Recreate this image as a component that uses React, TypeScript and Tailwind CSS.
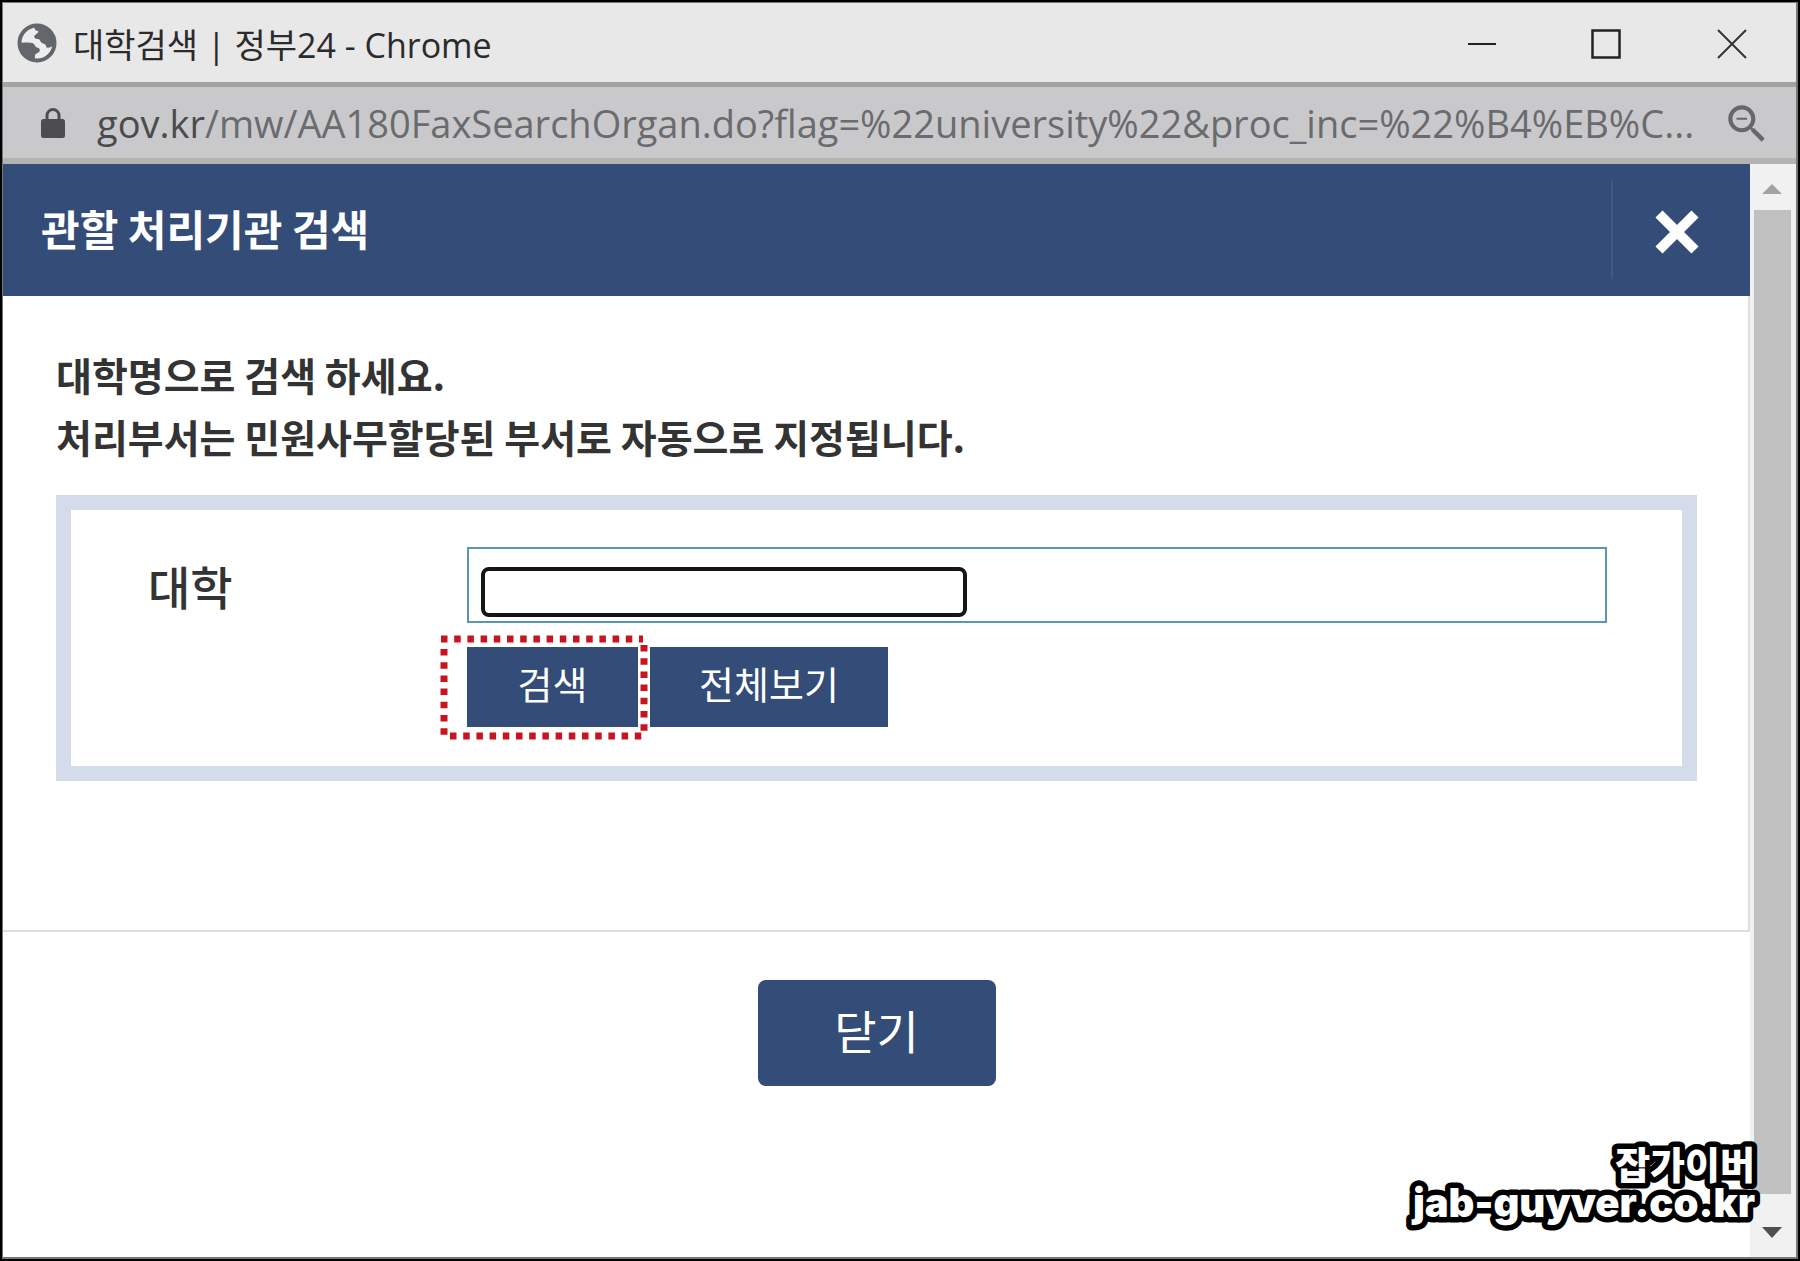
import React, { useState } from 'react';
import { MdZoomOut } from 'react-icons/md';

const GlobeIcon: React.FC = () => (
  <svg className="size-10 shrink-0" viewBox="0 0 40 40" aria-hidden="true">
    <circle cx="20" cy="20" r="17.500" fill="#eceded" stroke="#63666a" strokeWidth="4" />
    <path
      d="M18 3c-1.500 3 .5 4.500 3 5 1.500 1.500-2 3-3.500 4.500-1 2 1 3.500 3.500 3.500 2.500.3 2 3 4 4 3 .8 4 2 4.500 4.500 2 1 5-.5 7-2A17.500 17.500 0 0 0 18 3z"
      fill="#63666a"
    />
    <path
      d="M2.500 19.500c4 .6 9-.8 13 .6 2.500 1 2 3.400 4.500 4.400 2.500.6 3.500 2 2.500 4-1.500 2-4 1.500-4.500 4-.2 2 0 3.500-.5 5A18 18 0 0 1 2.500 19.500z"
      fill="#63666a"
    />
  </svg>
);

const LockIcon: React.FC = () => (
  <svg className="h-8 w-6 shrink-0" viewBox="0 0 24 32" fill="none" aria-hidden="true">
    <rect x="0" y="12" width="24" height="19" rx="2.500" fill="#4c4d50" />
    <path d="M6 13V8.500a6 6 0 0 1 12 0V13" stroke="#4c4d50" strokeWidth="3" />
  </svg>
);

const TitleBar: React.FC = () => (
  <header className="flex h-[84px] items-center justify-between border-b-[5px] border-[#a3a3a3] bg-[#e8e8e8] pl-3.5">
    <div className="flex items-center gap-4 text-[34px] leading-none text-[#2b2b2b]">
      <GlobeIcon />
      <h1 className="pt-1 font-['Open_Sans','Noto_Sans_CJK_KR',sans-serif]">대학검색 | 정부24 - Chrome</h1>
    </div>
    <div className="flex pt-0.5">
      <button aria-label="최소화" className="flex h-[77px] w-[124px] items-center justify-center">
        <svg width="30" height="30" viewBox="0 0 30 30" fill="none" stroke="#222" strokeWidth="2">
          <path d="M1 15h28" />
        </svg>
      </button>
      <button aria-label="최대화" className="flex h-[77px] w-[124px] items-center justify-center">
        <svg width="30" height="30" viewBox="0 0 30 30" fill="none" stroke="#222" strokeWidth="2.500">
          <path d="M1.500 1.500h27v27h-27z" />
        </svg>
      </button>
      <button aria-label="창 닫기" className="flex h-[77px] w-[128px] items-center justify-center">
        <svg width="30" height="30" viewBox="0 0 30 30" fill="none" stroke="#333" strokeWidth="2">
          <path d="M1 1l28 28M29 1L1 29" />
        </svg>
      </button>
    </div>
  </header>
);

const AddressBar: React.FC = () => (
  <div className="flex h-[77px] items-center border-b-[6px] border-[#b3b4b0] bg-[#c9c9cb] pr-6 pl-[38px]">
    <LockIcon />
    <p className="ml-8 min-w-0 flex-1 font-['Open_Sans',sans-serif] text-[38px] leading-none whitespace-nowrap text-[#6a6b6e]">
      <span className="text-[#4a4b4e]">gov.kr</span>/mw/AA180FaxSearchOrgan.do?flag=%22university%22&amp;proc_inc=%22%B4%EB%C...
    </p>
    <MdZoomOut className="mt-0.5 size-[50px] shrink-0 text-[#66676a]" />
  </div>
);

const Scrollbar: React.FC = () => (
  <div className="flex w-[46px] shrink-0 flex-col items-center bg-[#f1f1f1] pr-0.5" aria-hidden="true">
    <svg className="mt-5 mb-4" width="20" height="10" viewBox="0 0 20 10">
      <path d="M10 0l10 10H0z" fill="#a3a3a3" />
    </svg>
    <div className="w-[37px] flex-1 bg-[#c1c1c1]" />
    <svg className="mt-[33px] mb-[19px]" width="20" height="11" viewBox="0 0 20 11">
      <path d="M0 0h20L10 11z" fill="#505050" />
    </svg>
  </div>
);

const SearchForm: React.FC = () => {
  const [university, setUniversity] = useState('');

  return (
    <form
      onSubmit={(e) => e.preventDefault()}
      className="flex border-[15px] border-[#d4dceb] pt-[37px] pr-[75px] pb-[39px] pl-[77px]"
    >
      <label htmlFor="university" className="w-[319px] shrink-0 pt-1 text-[46px] leading-[68px] font-medium text-[#333]">
        대학
      </label>
      <div className="flex-1">
        <div className="relative">
          <input
            id="university"
            type="text"
            value={university}
            onChange={(e) => setUniversity(e.target.value)}
            className="block h-[76px] w-full border-2 border-[#5c95b0] bg-white px-4 text-4xl outline-none"
          />
          <div className="pointer-events-none absolute top-5 left-3.5 h-[50px] w-[486px] rounded-lg border-4 border-[#151515] bg-white" />
        </div>
        <div className="mt-6 flex gap-3 text-[38px] leading-none text-white">
          <div className="relative">
            <button type="submit" className="h-20 w-[171px] bg-[#334c78] pb-2">
              검색
            </button>
            <svg
              className="pointer-events-none absolute -top-3 -left-7"
              width="210"
              height="106"
              viewBox="0 0 210 106"
              fill="none"
              stroke="#c8141e"
              strokeWidth="7"
            >
              <path d="M2 4h202" strokeDasharray="6.500 6.700" />
              <path d="M5 14v88" strokeDasharray="6.500 6.700" />
              <path d="M11 101h194" strokeDasharray="6.500 6.700" />
              <path d="M205 10v88" strokeDasharray="6.500 6.700" />
            </svg>
          </div>
          <button type="button" className="h-20 w-[238px] bg-[#334c78] pb-2">
            전체보기
          </button>
        </div>
      </div>
    </form>
  );
};

const Watermark: React.FC = () => (
  <svg
    className="pointer-events-none absolute right-8 bottom-6 font-black"
    width="380"
    height="100"
    viewBox="0 0 380 100"
    fill="#fff"
    stroke="#000"
    strokeWidth="11"
    strokeLinejoin="round"
    paintOrder="stroke"
    textAnchor="end"
  >
    <text x="371" y="46" className="font-['Noto_Sans_CJK_KR',sans-serif] text-[38px]">
      잡가이버
    </text>
    <text x="371" y="84" className="font-['Inter',sans-serif] text-[40px]">
      jab-guyver.co.kr
    </text>
  </svg>
);

const App: React.FC = () => (
  <div className="flex min-h-screen flex-col bg-black p-0.5 font-['Noto_Sans_CJK_KR',sans-serif]">
    <div className="relative flex flex-1 flex-col border border-r-2 border-b-2 border-[#777] bg-white">
      <TitleBar />
      <AddressBar />
      <div className="flex flex-1">
        <main className="min-w-0 flex-1">
          <section className="border-r-2 border-b-2 border-[#dedede]">
            <div className="-mr-0.5 flex h-[132px] items-center justify-between bg-[#334c78] pl-[38px] text-white">
              <h2 className="pb-1 text-[42px] leading-none font-bold">관할 처리기관 검색</h2>
              <div className="flex h-[98px] w-[139px] items-center border-l-2 border-[#405a87] pt-1 pl-2">
                <button aria-label="닫기" className="flex h-full w-28 items-center justify-center">
                  <svg width="44" height="44" viewBox="0 0 44 44" fill="none" stroke="currentColor" strokeWidth="10">
                    <path d="M4 4l36 36M40 4L4 40" />
                  </svg>
                </button>
              </div>
            </div>
            <div className="pt-[47px] pr-[51px] pb-[149px] pl-[53px]">
              <p className="mb-7 text-[39px] leading-[62px] font-bold text-[#333]">
                대학명으로 검색 하세요.
                <br />
                처리부서는 민원사무할당된 부서로 자동으로 지정됩니다.
              </p>
              <SearchForm />
            </div>
          </section>
          <div className="flex justify-center py-12">
            <button className="h-[106px] w-[238px] rounded-lg bg-[#334c78] pb-2 text-[46px] leading-none text-white">닫기</button>
          </div>
        </main>
        <Scrollbar />
      </div>
      <Watermark />
    </div>
  </div>
);

export default App;
